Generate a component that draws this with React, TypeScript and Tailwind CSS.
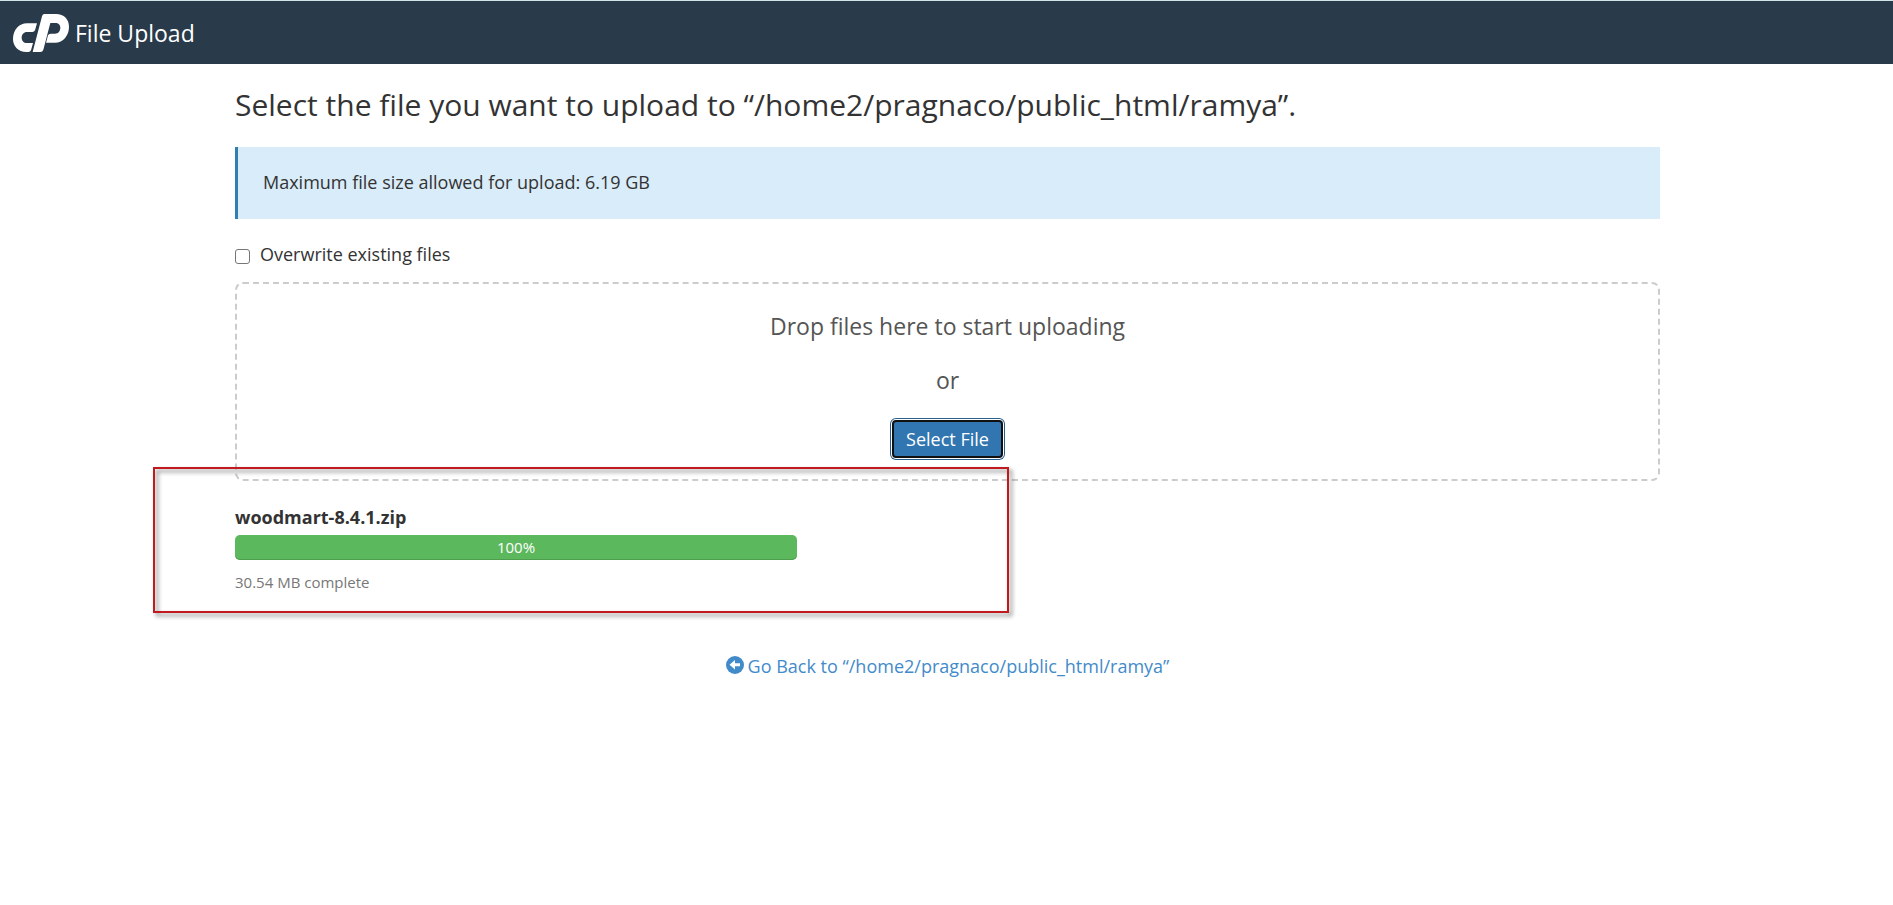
import { useState } from 'react';

const uploadPath = '/home2/pragnaco/public_html/ramya';

function Logo() {
  return (
    <svg viewBox="0 0 168 114" className="h-[38px] w-14" fill="#fff" aria-hidden="true">
      <path d="M42 28H72L66 49Q64 54 58 54H42C32 54 26 62 26 71C26 80 32 87 42 87H60L54 109Q52 114 46 114H40C16 114 0 97 0 75C0 48 18 28 42 28Z" />
      <path d="M94 0H129C153 0 168 16 168 38C168 64 151 86 126 86H99L105 64Q107 59 113 59H126C136 59 142 50 142 41C142 33 136 27 127 27H112L91 107Q89 114 82 114H59L87 7Q89 0 94 0Z" />
    </svg>
  );
}

function BackIcon() {
  return (
    <svg viewBox="0 0 18 18" className="mb-[2px] h-[18px] w-[18px]" aria-hidden="true">
      <circle cx="9" cy="9" r="9" fill="#428bca" />
      <path d="M3.5 8.7L9 4V7.2H14V10.2H9V13.4Z" fill="#fff" />
    </svg>
  );
}

export default function App() {
  const [overwrite, setOverwrite] = useState(false);
  const progress = 100;

  return (
    <div className="bg-white font-['Open_Sans',sans-serif] text-lg leading-[26px] text-[#333]">
      <header className="flex h-16 items-center gap-[6px] border-t border-[#cfe3e8] bg-[#293a4a] px-[13px] text-white">
        <Logo />
        <span className="text-[23px] leading-8">File Upload</span>
      </header>

      <main className="mx-auto max-w-[1467px] pr-5 pl-[22px]">
        <h1 className="pt-[21px] text-[30px] leading-10">
          Select the file you want to upload to “{uploadPath}”.
        </h1>

        <div className="mt-[22px] border-l-[3px] border-[#2f80ad] bg-[#d9ecf9] px-[25px] pt-[22px] pb-6">
          Maximum file size allowed for upload: 6.19 GB
        </div>

        <label htmlFor="overwrite" className="mt-[22px] flex w-fit items-center gap-[10px]">
          <input
            id="overwrite"
            type="checkbox"
            checked={overwrite}
            onChange={(e) => setOverwrite(e.target.checked)}
            className="mt-1 h-[15px] w-[15px] appearance-none rounded-[3px] border border-[#767676] bg-white checked:bg-[#3276b1]"
          />
          Overwrite existing files
        </label>

        <section className="mt-[15px] flex flex-col items-center rounded-lg border-2 border-dashed border-[#ccc] pt-[26px] pb-[21px] text-[#555]">
          <p className="text-[23px] leading-8">Drop files here to start uploading</p>
          <p className="mt-[22px] text-[23px] leading-8">or</p>
          <button
            type="button"
            className="mt-6 h-[38px] rounded-[4px] border-2 border-[#101010] bg-[#3276b1] px-3 leading-8 text-white shadow-[0_0_0_1px_#fff,0_0_0_2px_#285e8e]"
          >
            Select File
          </button>
        </section>

        <section className="relative pt-[23px]">
          <h2 className="font-bold">woodmart-8.4.1.zip</h2>
          <div className="mt-[5px] max-w-[562px]">
            <div
              role="progressbar"
              aria-label="Upload progress"
              aria-valuenow={progress}
              aria-valuemin={0}
              aria-valuemax={100}
              className="rounded-[5px] bg-[#5cb85c] text-center text-[15px] leading-[25px] text-white shadow-[inset_0_-1px_0_#4f9e4f]"
              style={{ width: `${progress}%` }}
            >
              {progress}%
            </div>
          </div>
          <p className="mt-[11px] text-[15px] leading-[22px] text-[#777]">30.54 MB complete</p>
          <div className="pointer-events-none absolute -top-[14px] -left-[82px] h-[146px] w-[856px] border-2 border-[#c01a1f] drop-shadow-[3px_3px_2px_rgba(0,0,0,0.5)]" />
        </section>

        <p className="mt-[60px] text-center">
          <a href="#back" className="inline-flex items-center gap-1 text-[#428bca]">
            <BackIcon />
            Go Back to “{uploadPath}”
          </a>
        </p>
      </main>
    </div>
  );
}
